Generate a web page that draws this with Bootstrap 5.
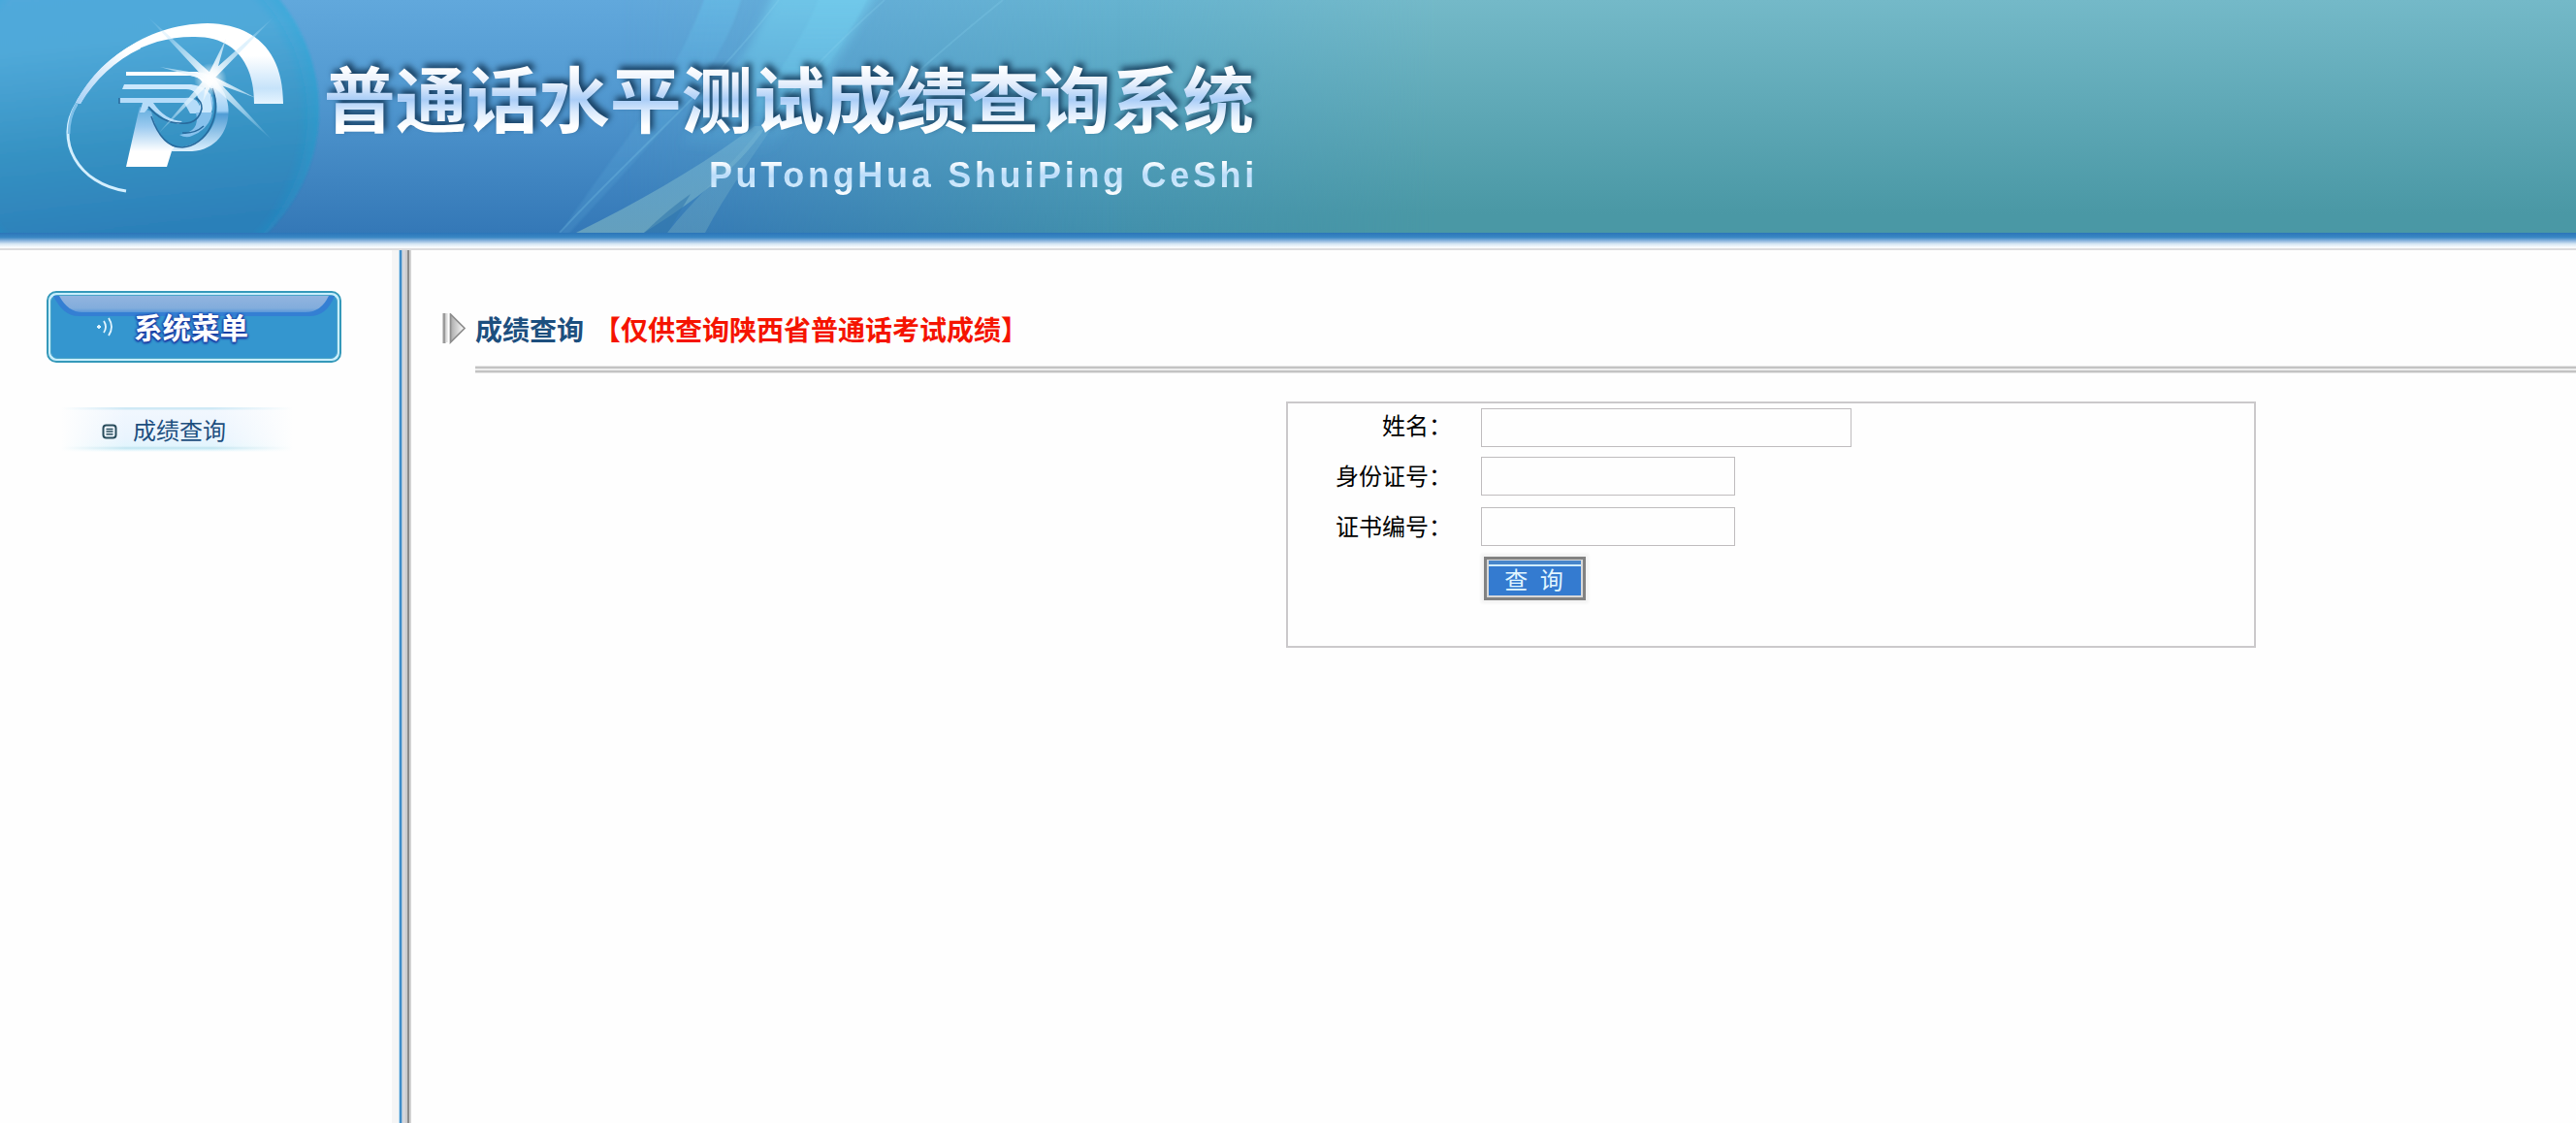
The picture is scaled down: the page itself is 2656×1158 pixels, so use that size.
<!DOCTYPE html>
<html lang="zh-CN">
<head>
<meta charset="utf-8">
<meta name="viewport" content="width=device-width, initial-scale=1">
<title>普通话水平测试成绩查询系统</title>
<link href="https://cdn.jsdelivr.net/npm/bootstrap@5.3.0/dist/css/bootstrap.min.css" rel="stylesheet">
<style>
  body { font-family: "Noto Sans CJK SC", sans-serif; background: #fefefe; color: #000; overflow: hidden; }
  .banner { height: 240px; background: linear-gradient(#74b9c8, #4a98a5 92%); }
  .banner-art { position: absolute; left: 0; top: 0; }
  .banner-copy { position: relative; width: 1293px; padding-top: 53px; }
  .site-title { font-size: 73.8px; line-height: 92px; font-weight: 700; margin-right: 0; white-space: nowrap;
    background: linear-gradient(#fff 18%, #e6effc 36%, #a9cdf7 54%, #dcebfd 68%, #fff 84%);
    -webkit-background-clip: text; background-clip: text; color: transparent;
    filter: drop-shadow(3px -4px 3px rgba(12,45,75,.85)); }
  .site-sub { font-family: "Liberation Sans", sans-serif; font-weight: 700; font-size: 36px; line-height: 42px; letter-spacing: 3.7px; margin: 15px -4px 0 0; white-space: nowrap;
    background: linear-gradient(#fff 15%, #b9dcfa 50%, #cfe9fc 75%, #fff 95%);
    -webkit-background-clip: text; background-clip: text; color: transparent; }
  .banner-edge { height: 18px; border-bottom: 2px solid #dcdcde; background: linear-gradient(#2b75b8, #3a88c4 30%, #8db6de 52%, #d5e6f4 72%, #f7fbfe 92%, #fafafa); }
  .workspace { height: 900px; }
  .side { width: 404px; padding: 42px 0 0 48px; }
  .menu-head { width: 304px; height: 74px; border-radius: 10px; border: 2px solid #3599ba; background: #c9eefd; padding: 2px; }
  .menu-face { height: 100%; border-radius: 7px; border: 1px solid #4ba5c8; background: #3496cf; position: relative; color: #fff; font-size: 29.5px; font-weight: 700; line-height: 64px; }
  .menu-shine { position: absolute; left: 2px; top: 0; }
  .menu-face span { position: relative; margin-left: 20px; top: -1px; text-shadow: 0 0 3px #1d3fa6, 1px 1px 2px #1d3fa6, -1px 0 2px #1d3fa6, 0 2px 2px #1d3fa6; }
  .menu-face .waves { position: relative; margin-left: 47px; }
  .menu-link { width: 278px; height: 46px; margin: 46px 0 0 15px; padding-left: 42px; font-size: 24px; color: #1d4f7e; text-decoration: none; position: relative;
    background: linear-gradient(90deg, #fefefe 0, transparent 24%, transparent 56%, #fefefe 86%), linear-gradient(#cfe9f6 0 2px, #f1f7fe 3px, #e9f4fe 70%, #e2f5fd 40px, #bfe4f0 42px, #e1f5fc 44px, #fefefe 46px); }
  .menu-link svg { position: relative; top: 2px; }
  .menu-link span { margin-left: 16px; }
  .divider { width: 20px; background: linear-gradient(90deg, #f5f5f5 0 7px, #b8dcf2 7px 8px, #3f8cc8 8px 10px, #a4c3dc 10px 11px, #d5d5da 11px 14px, #cbcbcd 14px 16px, #8b8b8b 16px 18px, #d2d2d2 18px 20px); }
  .page-area { padding: 60px 0 0 32px; }
  .page-title { font-size: 28px; line-height: 42px; font-weight: 700; color: #1d4f7e; margin: 0; }
  .page-title small { font-size: 28px; font-weight: 700; color: #f51400; margin-left: 10px; }
  .rule { height: 8px; margin: 17px 0 0 34px; background: linear-gradient(#e8e8e8 0 1px, #c3c3c3 1px 3px, #ededed 3px 5px, #c3c3c3 5px 7px, #e6e6e6 7px); }
  .query-box { width: 1000px; height: 254px; margin: 29px 0 0 870px; border: 2px solid #cbc9cb; padding: 5px 0 0 49px; font-size: 24px; }
  .query-box label { width: 120px; line-height: 37px; text-align: right; white-space: nowrap; }
  .query-row { height: 52px; }
  .query-row.name-row { height: 50px; }
  .query-row.name-row label { line-height: 33px; }
  .query-box .form-control { width: 262px; height: 40px; border: 1px solid #bfbcbe; box-shadow: none; border-radius: 0; margin-left: 30px; background: #fefefe; }
  .query-box .form-control.wide { width: 382px; }
  .query-btn { display: block; width: 105px; height: 45px; margin: -1px 0 0 153px; border-radius: 0; border: 3px solid #828282; padding: 0; color: #e2f6ff; font-size: 24px; line-height: 38px; word-spacing: 7px; text-indent: -2px;
    background: linear-gradient(#4785ca 0 4px, #d1edff 4px 6px, #347bd0 6px) 2px 1px / 95px 36px no-repeat #d8d8d8; box-shadow: 0 0 3px 3px #f3f3f3; }
</style>
<script src="https://cdn.jsdelivr.net/npm/bootstrap@5.3.0/dist/js/bootstrap.bundle.min.js"></script>
</head>
<body>
<header class="banner position-relative">
  <svg class="banner-art" width="1500" height="240" viewBox="0 0 1500 240" aria-hidden="true">
    <defs>
      <linearGradient id="mid" x2="0" y2="1"><stop stop-color="#61a8dc"/><stop offset=".35" stop-color="#549bd2"/><stop offset="1" stop-color="#3478b7"/></linearGradient>
      <linearGradient id="sea" x2="0" y2="1"><stop stop-color="#66b3d0"/><stop offset="1" stop-color="#4290ac"/></linearGradient>
      <linearGradient id="edge" x2="0" y2="1"><stop stop-color="#74b9c8"/><stop offset=".92" stop-color="#4a98a5"/></linearGradient>
      <linearGradient id="fa"><stop offset="0" stop-color="#fff" stop-opacity="0"/><stop offset="1" stop-color="#fff"/></linearGradient>
      <mask id="m1"><rect x="640" width="510" height="240" fill="url(#fa)"/><rect x="1149" width="351" height="240" fill="#fff"/></mask>
      <mask id="m2"><rect x="1150" width="330" height="240" fill="url(#fa)"/><rect x="1479" width="21" height="240" fill="#fff"/></mask>
      <linearGradient id="orb" x2=".15" y2="1"><stop stop-color="#51a9db"/><stop offset=".25" stop-color="#50a9d9"/><stop offset=".65" stop-color="#3692c3"/><stop offset="1" stop-color="#2c80b9"/></linearGradient>
      <radialGradient id="halo" gradientUnits="userSpaceOnUse" cx="135" cy="120" r="196"><stop offset=".88" stop-color="#1ba5da" stop-opacity="0"/><stop offset="1" stop-color="#27abdc" stop-opacity=".35"/></radialGradient>
      <linearGradient id="arc" gradientUnits="userSpaceOnUse" x1="0" y1="24" x2="0" y2="108"><stop offset=".4" stop-color="#fff"/><stop offset=".8" stop-color="#c6e3fa"/><stop offset="1" stop-color="#e9f6ff"/></linearGradient>
      <linearGradient id="arcl" gradientUnits="userSpaceOnUse" x1="125" y1="50" x2="78" y2="108"><stop stop-color="#fff"/><stop offset="1" stop-color="#a6d0f6"/></linearGradient>
      <linearGradient id="stem" gradientUnits="userSpaceOnUse" x1="0" y1="108" x2="0" y2="172"><stop stop-color="#5ba9da"/><stop offset=".35" stop-color="#9bcaf0"/><stop offset=".75" stop-color="#fff"/></linearGradient>
      <linearGradient id="bowl" gradientUnits="userSpaceOnUse" x1="0" y1="75" x2="0" y2="157"><stop stop-color="#fff"/><stop offset=".48" stop-color="#9fd0f6"/><stop offset=".52" stop-color="#4f9cd5"/><stop offset="1" stop-color="#dff2ff"/></linearGradient>
      <radialGradient id="flare"><stop stop-color="#fff"/><stop offset=".4" stop-color="#fff" stop-opacity=".6"/><stop offset="1" stop-color="#fff" stop-opacity="0"/></radialGradient>
      <radialGradient id="ray" gradientUnits="userSpaceOnUse" cx="218" cy="80" r="90"><stop stop-color="#fff"/><stop offset=".55" stop-color="#c9e8fb" stop-opacity=".6"/><stop offset="1" stop-color="#b2def7" stop-opacity="0"/></radialGradient>
      <linearGradient id="band" x2="0" y2="1"><stop stop-color="#72cbec" stop-opacity=".85"/><stop offset=".6" stop-color="#68bfe3" stop-opacity=".5"/><stop offset="1" stop-color="#60b6df" stop-opacity="0"/></linearGradient>
      <linearGradient id="tail" gradientUnits="userSpaceOnUse" x1="0" y1="120" x2="0" y2="240"><stop stop-color="#7fc0dc" stop-opacity=".35"/><stop offset="1" stop-color="#74adc0" stop-opacity=".75"/></linearGradient>
      <linearGradient id="rib2" x2="0" y2="1"><stop stop-color="#68c4ec" stop-opacity=".5"/><stop offset=".35" stop-color="#5fb2e2" stop-opacity=".25"/><stop offset="1" stop-color="#5aa6d8" stop-opacity=".22"/></linearGradient>
      <filter id="soft" x="-5%" y="-5%" width="110%" height="110%"><feGaussianBlur stdDeviation="1.2"/></filter>
      <filter id="softer" x="-10%" y="-10%" width="120%" height="120%"><feGaussianBlur stdDeviation="5"/></filter>
    </defs>
    <rect width="1500" height="240" fill="url(#mid)"/>
    <rect width="1500" height="240" fill="url(#sea)" mask="url(#m1)"/>
    <rect width="1500" height="240" fill="url(#edge)" mask="url(#m2)"/>
    <path d="M-10 -10H280C345 60 350 175 265 250H-10Z" fill="url(#orb)" filter="url(#soft)"/>
    <path d="M-10 -10H280C345 60 350 175 265 250H-10Z" fill="url(#halo)" filter="url(#soft)"/>
    <!-- light ribbons -->
    <path d="M728 -6H765C750 70 660 160 582 246H575C625 165 690 100 728 -6Z" fill="url(#rib2)" filter="url(#soft)"/>
    <path d="M800 -10H905C872 50 835 110 790 160L700 150C735 110 770 60 800 -10Z" fill="url(#band)" filter="url(#softer)"/>
    <path d="M845 -4H896C875 35 852 75 822 105C800 115 770 130 755 145C790 90 825 50 845 -4Z" fill="url(#band)" filter="url(#soft)" opacity=".8"/>
    <path d="M594 240C665 205 725 170 778 130H790C765 170 720 205 664 240Z" fill="url(#tail)"/>
    <path d="M688 240C720 200 755 170 782 135L797 130C770 170 745 205 727 240Z" fill="url(#tail)" opacity=".55"/>
    <path d="M664 240Q690 215 712 200L688 240Z" fill="#3479ae" opacity=".6"/>
    <path d="M803 0C735 90 650 160 577 240M1034 0Q960 60 910 108M912 0Q850 55 790 125" fill="none" stroke="#8bd5f2" stroke-opacity=".22" stroke-width="2"/>
    <!-- emblem ring -->
    <path d="M78 106C99 67 147 25 214 24C264 25 292 54 292 107H262C262 65 242 38 201 38C150 37 104 66 83 107Z" fill="url(#arc)"/>
    <path d="M78 106C92 79 113 58 142 43L145 50C118 63 99 81 83 107Z" fill="url(#arcl)"/>
    <path d="M79 107C55 145 81 190 130 197" fill="none" stroke="#d4efff" stroke-width="3"/>
    <path d="M79 107Q71 121 71 138" fill="none" stroke="#7fc0e9" stroke-width="2.6"/>
    <!-- emblem letter shape -->
    <path d="M144 110L156 115Q164 150 186 153L177 156L172 172H130Z" fill="url(#stem)"/>
    <path d="M205 78C246 80 248 153 198 156H176L180 152C226 152 235 100 210 84Z" fill="url(#bowl)"/>
    <path d="M130 74H203Q220 76 226 88L209 85Q204 78 196 78H130Z" fill="#fff"/>
    <path d="M128 87H197Q214 89 219 101Q221 112 215 121Q202 116 206 108Q204 92 192 92H126Z" fill="#cbe8fd"/>
    <path d="M123 101H191Q203 99 207 112V117H196L190 106H158Q170 124 188 125L184 128Q168 124 154 110L149 116H144L147 106H123Z" fill="#b5dcf9"/>
    <path d="M216 90Q228 128 198 140Q192 143 185 139Q207 136 202 116H219Z" fill="#87c1ec"/>
    <path d="M153 110Q167 127 186 127Q204 129 208 112Q208 104 202 101M123 101V107M156 120Q167 152 188 152C214 150 229 118 219 91M188 137Q201 138 210 130" fill="none" stroke="#286a9d" stroke-width="1.6"/>
    <!-- star -->
    <path d="M150 15L219 77L283 147L213 83ZM285 15L220 82L162 139L214 78ZM233 40L221 82L209 105L214 78ZM165 69L219 78L264 101L217 84Z" fill="url(#ray)"/>
    <circle cx="217" cy="82" r="17" fill="url(#flare)"/>
  </svg>
  <div class="banner-copy d-flex flex-column align-items-end">
    <h1 class="site-title mb-0">普通话水平测试成绩查询系统</h1>
    <div class="site-sub">PuTongHua ShuiPing CeShi</div>
  </div>
</header>
<div class="banner-edge"></div>
<div class="workspace d-flex">
  <aside class="side flex-shrink-0">
    <div class="menu-head">
      <div class="menu-face d-flex align-items-center">
        <svg class="menu-shine" width="290" height="24" aria-hidden="true"><defs><linearGradient id="gl" x2="0" y2="1"><stop stop-color="#92b4df"/><stop offset=".75" stop-color="#82addc"/><stop offset="1" stop-color="#5a98d9"/></linearGradient></defs><path d="M0 0H290Q282 21 264 21H26Q10 21 0 0Z" fill="#347fd3"/><path d="M6 0H284Q276 17 260 17H30Q15 17 6 0Z" fill="url(#gl)"/></svg>
        <svg class="waves" width="18" height="20" viewBox="0 0 18 20" fill="none" stroke="#e3f5ff" stroke-width="1.8" aria-hidden="true"><path d="M0 10h4M2 8v4M7 4q4 6 0 12M12 1q6 9 0 18"/></svg>
        <span>系统菜单</span>
      </div>
    </div>
    <a class="menu-link d-flex align-items-center" href="#">
      <svg width="16" height="16" viewBox="0 0 16 16" fill="none" stroke="#294c5c" stroke-width="2" aria-hidden="true"><rect x="1.5" y="1.5" width="13" height="13" rx="3"/><path d="M4.5 5.5h7M4.5 8h7M4.5 10.7h7" stroke-width="1.4"/></svg>
      <span>成绩查询</span>
    </a>
  </aside>
  <div class="divider flex-shrink-0"></div>
  <main class="page-area flex-grow-1">
    <div class="d-flex align-items-center">
      <svg class="flex-shrink-0" width="34" height="32" viewBox="0 0 34 32" aria-hidden="true"><defs><linearGradient id="tri"><stop stop-color="#aaa"/><stop offset="1" stop-color="#fff"/></linearGradient></defs><path d="M2 0v31" stroke="#9b9b9b" stroke-width="3"/><path d="M8.5 1V30L23 15.5Z" fill="url(#tri)" stroke="#8d8d8d" stroke-width="1.7"/><path d="M4.8 0v30" stroke="#ddd" stroke-width="1.5"/></svg>
      <h2 class="page-title">成绩查询<small>【仅供查询陕西省普通话考试成绩】</small></h2>
    </div>
    <div class="rule"></div>
    <form class="query-box" autocomplete="off">
      <div class="d-flex align-items-start query-row name-row"><label for="n">姓名：</label><input id="n" class="form-control wide" type="text"></div>
      <div class="d-flex align-items-start query-row"><label for="c">身份证号：</label><input id="c" class="form-control" type="text"></div>
      <div class="d-flex align-items-start query-row"><label for="z">证书编号：</label><input id="z" class="form-control" type="text"></div>
      <button class="btn query-btn" type="button">查 询</button>
    </form>
  </main>
</div>
</body>
</html>
